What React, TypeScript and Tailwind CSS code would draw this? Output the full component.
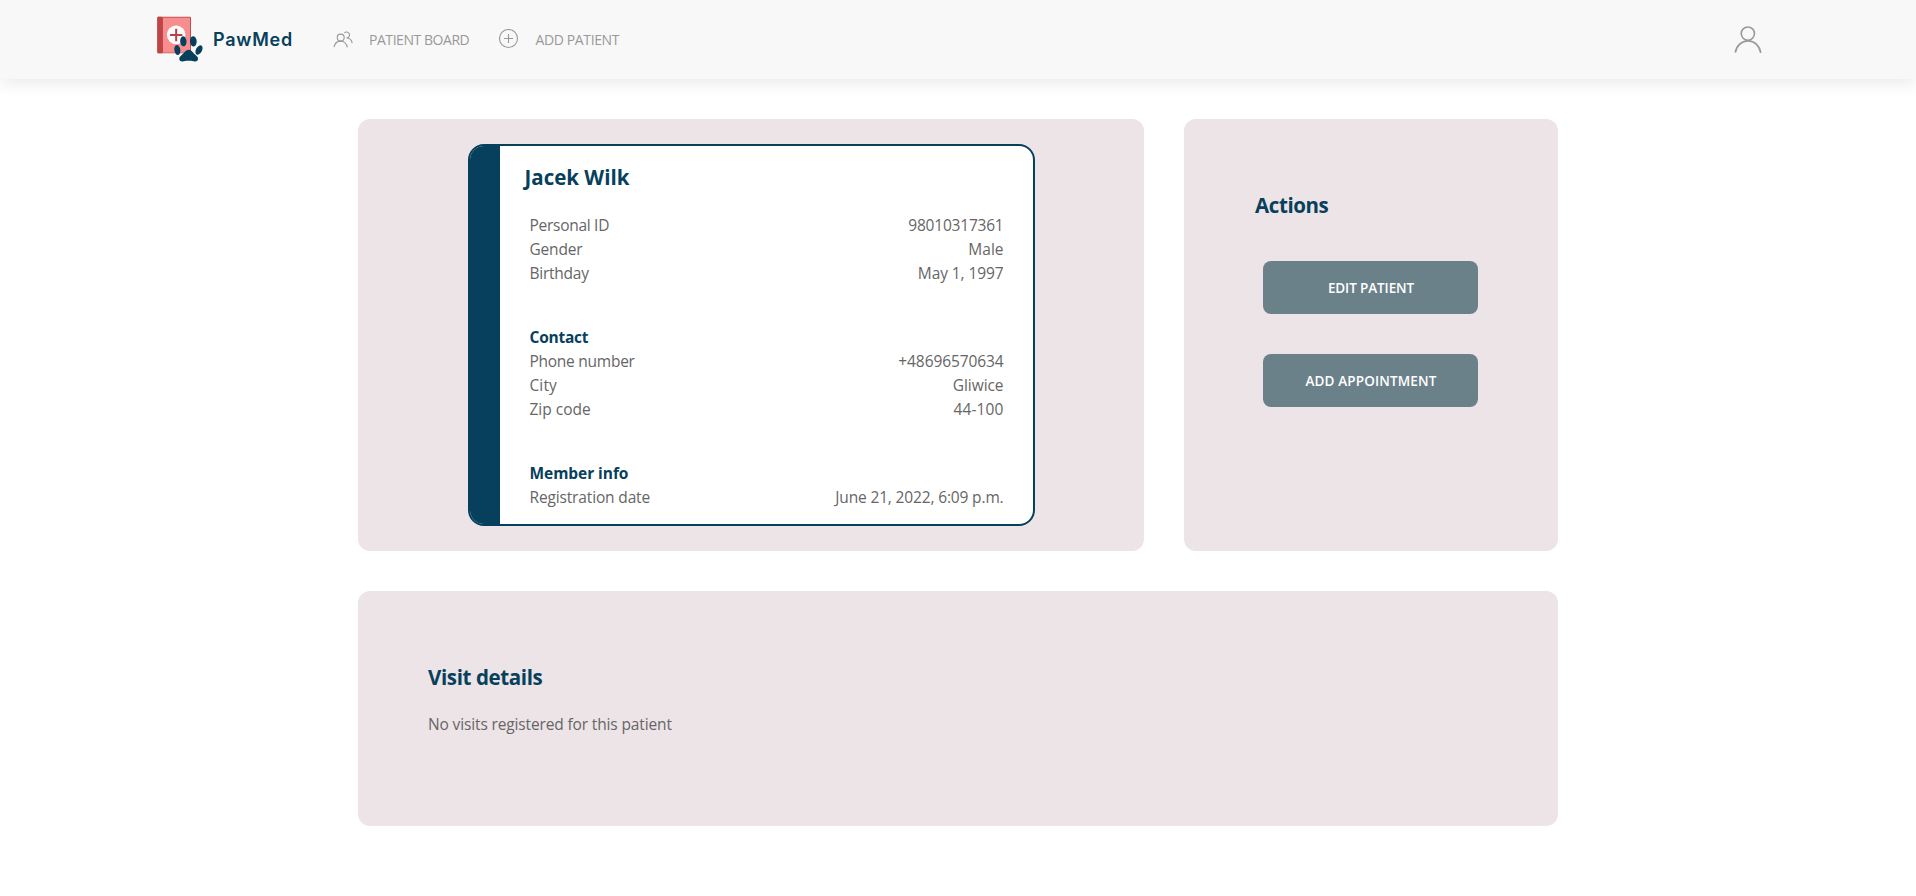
import type { ReactNode } from "react";

function Logo() {
  return (
    <svg className="mb-[2px] h-[46px] w-[46px] shrink-0" viewBox="50 49 138 138">
      <rect x="51" y="51" width="101" height="110" rx="3" fill="#c74a4e" />
      <rect x="68" y="54" width="81" height="105" fill="#f78d8d" />
      <rect x="51" y="51" width="15" height="110" rx="3" fill="#bf4448" />
      <circle cx="107.500" cy="105.500" r="28" fill="#fdfbfb" />
      <path d="M107.500 87.500v37M89 106h37" stroke="#b9434a" strokeWidth="6" fill="none" />
      <g fill="#07405c">
        <ellipse cx="129" cy="125" rx="9.500" ry="15" transform="rotate(-4 129 125)" />
        <ellipse cx="159" cy="125" rx="10" ry="15.500" transform="rotate(-4 159 125)" />
        <ellipse cx="111" cy="151" rx="9" ry="15" transform="rotate(-8 111 151)" />
        <ellipse cx="176" cy="151" rx="9" ry="15" transform="rotate(28 176 151)" />
        <path d="M145 150c8 0 13 9 20 15 6 5 9 9 8 14-1 6-7 8-13 6-6-2-10-2-15-2s-9 0-15 2-12 0-13-6c-1-5 2-9 8-14 7-6 12-15 20-15z" />
      </g>
    </svg>
  );
}

function UsersIcon() {
  return (
    <svg className="mb-[2px] h-5 w-5" viewBox="0 0 20 20" fill="none" stroke="#999" strokeWidth="1.1">
      <circle cx="7.700" cy="8.600" r="3.500" />
      <path d="M1,18.1 C1.7,14.6 4.4,12.1 7.6,12.1 C10.9,12.1 13.7,14.8 14.3,18.3" />
      <path d="M11.4,4 C12.8,2.4 15.4,2.8 16.3,4.7 C17.2,6.6 15.7,8.9 13.6,8.9 C16.5,8.9 18.8,11.3 19.2,14.1" />
    </svg>
  );
}

function PlusCircleIcon() {
  return (
    <svg className="mb-[2px] h-5 w-5" viewBox="0 0 20 20" fill="none" stroke="#999" strokeWidth="1.1">
      <circle cx="9.500" cy="9.500" r="9" />
      <path d="M9.500 5v9M5 9.500h9" />
    </svg>
  );
}

function UserIcon() {
  return (
    <svg className="mb-[2px] h-[30px] w-[30px]" viewBox="0 0 20 20" fill="none" stroke="#999" strokeWidth="1.1">
      <circle cx="9.900" cy="6.400" r="4.400" />
      <path d="M1.5,19 C2.3,14.5 5.8,11.2 10,11.2 C14.2,11.2 17.7,14.6 18.5,19.2" />
    </svg>
  );
}

function Title({ children, className = "" }: { children: ReactNode; className?: string }) {
  return <h2 className={`text-[20.5px] leading-7 font-bold text-[#07405c] ${className}`}>{children}</h2>;
}

type Field = { label: string; value: string; labelTracking: string; valueTracking: string };

function Rows({ fields }: { fields: Field[] }) {
  return (
    <dl>
      {fields.map((f) => (
        <div key={f.label} className="flex justify-between">
          <dt className={f.labelTracking}>{f.label}</dt>
          <dd className={f.valueTracking}>{f.value}</dd>
        </div>
      ))}
    </dl>
  );
}

const personal: Field[] = [
  { label: "Personal ID", value: "98010317361", labelTracking: "tracking-[-0.28px]", valueTracking: "tracking-[-0.21px]" },
  { label: "Gender", value: "Male", labelTracking: "tracking-[-0.2px]", valueTracking: "tracking-normal" },
  { label: "Birthday", value: "May 1, 1997", labelTracking: "tracking-[-0.25px]", valueTracking: "tracking-[-0.09px]" },
];

const contact: Field[] = [
  { label: "Phone number", value: "+48696570634", labelTracking: "tracking-[-0.26px]", valueTracking: "tracking-[-0.1px]" },
  { label: "City", value: "Gliwice", labelTracking: "tracking-[0.1px]", valueTracking: "tracking-[-0.07px]" },
  { label: "Zip code", value: "44-100", labelTracking: "tracking-normal", valueTracking: "tracking-[0.1px]" },
];

const member: Field[] = [
  { label: "Registration date", value: "June 21, 2022, 6:09 p.m.", labelTracking: "tracking-[-0.15px]", valueTracking: "tracking-[-0.15px]" },
];

function ActionButton({ children, className }: { children: ReactNode; className: string }) {
  return (
    <button className={`flex h-[53px] w-[215px] items-center justify-center rounded-lg bg-[#6b818a] pl-px text-[13.5px] font-semibold text-white uppercase ${className}`}>
      {children}
    </button>
  );
}

export default function App() {
  return (
    <div className="min-h-[896px] bg-white font-['Open_Sans',sans-serif] text-[15.5px] leading-6 text-[#666]">
      <nav className="h-[79px] bg-[#f8f8f8] shadow-[0_5px_15px_rgba(0,0,0,0.08)]">
        <div className="mx-auto flex h-full w-[1602px] items-center">
          <Logo />
          <span className="ml-2.5 w-[120px] font-['Inter',sans-serif] text-[18px] font-semibold tracking-[0.75px] text-[#07405c]">PawMed</span>
          <a className="flex items-center text-sm text-[#999]">
            <UsersIcon />
            <span className="ml-4 w-[130px] tracking-[-0.45px]">PATIENT BOARD</span>
          </a>
          <a className="flex items-center text-sm text-[#999]">
            <PlusCircleIcon />
            <span className="ml-[16.5px] tracking-[-0.38px]">ADD PATIENT</span>
          </a>
          <div className="mr-[-4px] ml-auto">
            <UserIcon />
          </div>
        </div>
      </nav>

      <main className="mx-auto mt-10 flex w-[1200px] flex-col gap-10">
        <div className="flex h-[432px] gap-10">
          <section className="flex w-[786px] justify-center rounded-xl bg-[#ede4e7] py-[25px]">
            <div className="flex w-[567px] overflow-hidden rounded-2xl border-2 border-[#07405c] bg-white">
              <div className="w-[30px] bg-[#07405c]" />
              <div className="flex-1 pt-[17px] pr-[29px] pl-[25px]">
                <Title>Jacek Wilk</Title>
                <div className="mt-[22px] flex flex-col gap-10 pl-[5px]">
                  <Rows fields={personal} />
                  <div>
                    <h3 className="font-bold tracking-[-0.25px] text-[#07405c]">Contact</h3>
                    <Rows fields={contact} />
                  </div>
                  <div>
                    <h3 className="font-bold tracking-[-0.06px] text-[#07405c]">Member info</h3>
                    <Rows fields={member} />
                  </div>
                </div>
              </div>
            </div>
          </section>
          <section className="w-[374px] rounded-xl bg-[#ede4e7] px-[71px] pt-[72px]">
            <Title className="tracking-[-0.4px]">Actions</Title>
            <div className="mt-[42px] flex flex-col gap-10 pl-2">
              <ActionButton className="tracking-[-0.1px]">Edit patient</ActionButton>
              <ActionButton className="tracking-[0.15px]">Add appointment</ActionButton>
            </div>
          </section>
        </div>
        <section className="h-[235px] rounded-xl bg-[#ede4e7] px-[70px] pt-[72px]">
          <Title className="tracking-[-0.38px]">Visit details</Title>
          <p className="mt-[21px] tracking-[-0.14px]">No visits registered for this patient</p>
        </section>
      </main>
    </div>
  );
}
